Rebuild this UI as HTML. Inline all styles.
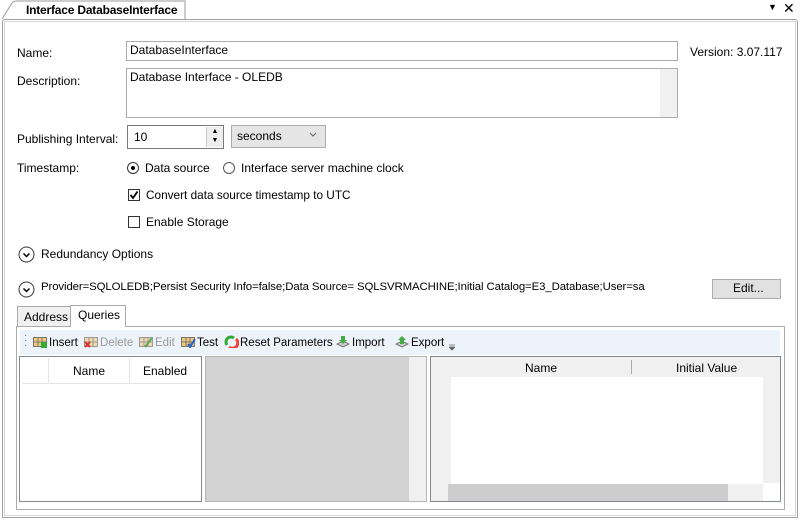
<!DOCTYPE html>
<html><head><style>
body{margin:0;width:800px;height:521px;background:#fff;font-family:"Liberation Sans",sans-serif;font-size:12px;color:#000;position:relative;overflow:hidden}
.a{position:absolute}
.box{position:absolute;border:1px solid #acacac;background:#fff;box-sizing:border-box}
.t{position:absolute;white-space:nowrap}
.cb{position:absolute;width:12px;height:12px;border:1px solid #333;box-sizing:border-box;background:#fff}
.rd{position:absolute;width:12px;height:12px;border:1px solid #333;border-radius:50%;box-sizing:border-box;background:#fff}
.ic{display:inline-block;width:15px;height:13px;vertical-align:-2px;margin-right:1px}
.tb{font-size:11.5px}
</style></head><body>
<div class="a" style="left:0;top:0;width:800px;height:19px;background:#fff"></div>
<svg class="a" style="left:0;top:0" width="190" height="20"><path d="M2 19 L12 3 Q14 1 17 1 L185 1 L185 19" fill="#fff" stroke="#9a9a9a"/></svg>
<div class="t" style="left:26px;top:3px;font-weight:bold;font-size:12px;letter-spacing:-0.2px">Interface DatabaseInterface</div>
<div class="t" style="left:768px;top:2px;font-size:9px">▼</div>
<div class="t" style="left:783px;top:0px;font-size:14px">✕</div>
<div class="a" style="left:2px;top:19px;width:796px;height:499px;border:1px solid #a0a0a0;border-radius:3px 3px 0 0;box-sizing:border-box"></div>
<div class="a" style="left:4px;top:21px;width:792px;height:495px;border:1px solid #d8d8d8;box-sizing:border-box"></div>

<div class="t" style="left:17px;top:46px">Name:</div>
<div class="box" style="left:126px;top:41px;width:552px;height:20px"></div>
<div class="t" style="left:130px;top:43px">DatabaseInterface</div>
<div class="t" style="left:690px;top:45px">Version: 3.07.117</div>

<div class="t" style="left:17px;top:74px">Description:</div>
<div class="box" style="left:126px;top:68px;width:552px;height:50px"></div>
<div class="a" style="left:660px;top:69px;width:17px;height:48px;background:#f0f0f0"></div>
<div class="t" style="left:130px;top:70px">Database Interface - OLEDB</div>

<div class="t" style="left:17px;top:132px">Publishing Interval:</div>
<div class="box" style="left:127px;top:125px;width:97px;height:24px;border-color:#7a7a7a"></div>
<div class="t" style="left:134px;top:130px">10</div>
<div class="a" style="left:206px;top:127px;width:16px;height:20px;background:#eee;border-left:1px solid #ccc;font-size:7px;line-height:9px;text-align:center">▲<br>▼</div>
<div class="box" style="left:231px;top:125px;width:95px;height:23px;background:#e5e5e5"></div>
<div class="t" style="left:237px;top:129px">seconds</div>
<svg class="a" style="left:309px;top:132px" width="8" height="6"><path d="M1 1l3 3 3-3" stroke="#666" fill="none"/></svg>

<div class="t" style="left:17px;top:161px">Timestamp:</div>
<div class="rd" style="left:127px;top:162px"></div><div class="a" style="left:131px;top:166px;width:4px;height:4px;border-radius:50%;background:#000"></div>
<div class="t" style="left:145px;top:161px">Data source</div>
<div class="rd" style="left:223px;top:162px;border-color:#555"></div>
<div class="t" style="left:241px;top:161px">Interface server machine clock</div>

<div class="cb" style="left:128px;top:189px"></div>
<svg class="a" style="left:128px;top:189px" width="12" height="12"><path d="M2.5 6l2.5 3 4.5-6.5" stroke="#000" stroke-width="1.8" fill="none"/></svg>
<div class="t" style="left:146px;top:188px;font-size:11.8px">Convert data source timestamp to UTC</div>
<div class="cb" style="left:128px;top:216px"></div>
<div class="t" style="left:146px;top:215px">Enable Storage</div>

<svg class="a" style="left:18px;top:246px" width="17" height="17"><circle cx="8.5" cy="8.5" r="7.5" stroke="#333" fill="none"/><path d="M5.5 7.5l3 3 3-3" stroke="#000" stroke-width="1.5" fill="none"/></svg>
<div class="t" style="left:41px;top:247px">Redundancy Options</div>
<svg class="a" style="left:18px;top:281px" width="17" height="17"><circle cx="8.5" cy="8.5" r="7.5" stroke="#333" fill="none"/><path d="M5.5 7.5l3 3 3-3" stroke="#000" stroke-width="1.5" fill="none"/></svg>
<div class="t" style="left:41px;top:281px;font-size:11.4px;letter-spacing:-0.1px">Provider=SQLOLEDB;Persist Security Info=false;Data Source= SQLSVRMACHINE;Initial Catalog=E3_Database;User=sa</div>
<div class="box" style="left:712px;top:279px;width:69px;height:20px;background:#e1e1e1;border-color:#adadad"></div>
<div class="t" style="left:733px;top:281px">Edit...</div>

<div class="a" style="left:16px;top:326px;width:769px;height:184px;border:1px solid #acacac;box-sizing:border-box"></div>
<div class="a" style="left:17px;top:306px;width:54px;height:21px;border:1px solid #acacac;background:#f0f0f0;box-sizing:border-box"></div>
<div class="t" style="left:24px;top:310px">Address</div>
<div class="a" style="left:70px;top:305px;width:56px;height:22px;border:1px solid #acacac;border-bottom:none;background:#fff;box-sizing:border-box"></div>
<div class="t" style="left:78px;top:308px">Queries</div>

<div class="a" style="left:20px;top:330px;width:760px;height:25px;background:#edf3fb"></div>
<div class="t" style="left:24px;top:333px;font-size:10px;color:#666;line-height:5px">·<br>·<br>·</div>
<div class="t tb" style="left:33px;top:335px"><svg class="ic"><rect x="0.5" y="2.5" width="13" height="9" fill="#f4c878" stroke="#777"/><path d="M5 3v8M9 3v8M1 7h12" stroke="#777"/><rect x="8" y="7" width="6" height="6" fill="#3a3"/></svg>Insert</div>
<div class="t tb" style="left:84px;top:335px;color:#999"><svg class="ic"><rect x="0.5" y="2.5" width="13" height="9" fill="#f4d8a8" stroke="#999"/><path d="M5 3v8M9 3v8M1 7h12" stroke="#999"/><path d="M1 7l5 5M6 7l-5 5" stroke="#d33" stroke-width="2"/></svg>Delete</div>
<div class="t tb" style="left:139px;top:335px;color:#999"><svg class="ic"><rect x="0.5" y="2.5" width="13" height="9" fill="#f4d8a8" stroke="#999"/><path d="M5 3v8M9 3v8M1 7h12" stroke="#999"/><path d="M6 12l7-9" stroke="#5a5" stroke-width="2"/></svg>Edit</div>
<div class="t tb" style="left:181px;top:335px"><svg class="ic"><rect x="0.5" y="2.5" width="13" height="9" fill="#f4c878" stroke="#777"/><path d="M5 3v8M9 3v8M1 7h12" stroke="#777"/><path d="M7 9l2 3 5-8" stroke="#26c" stroke-width="2" fill="none"/></svg>Test</div>
<div class="t tb" style="left:224px;top:335px"><svg class="ic"><path d="M3 10A5 5 0 0 1 10 3" stroke="#3a3" stroke-width="3" fill="none"/><path d="M12 4A5 5 0 0 1 5 12" stroke="#e43" stroke-width="3" fill="none"/></svg>Reset Parameters</div>
<div class="t tb" style="left:336px;top:335px"><svg class="ic"><path d="M1 9l6 3 6-3-6-3z" fill="#ccc" stroke="#777"/><path d="M5 1h4v4h2l-4 4-4-4h2z" fill="#4a4"/></svg>Import</div>
<div class="t tb" style="left:395px;top:335px"><svg class="ic"><path d="M1 9l6 3 6-3-6-3z" fill="#ccc" stroke="#777"/><path d="M5 9h4V5h2L7 1 3 5h2z" fill="#4a4"/></svg>Export</div>
<svg class="a" style="left:449px;top:344px" width="6" height="7"><path d="M0 1h6M0 3l3 3 3-3z" stroke="#666" fill="#666" stroke-width="0.8"/></svg>

<div class="a" style="left:19px;top:356px;width:183px;height:146px;border:1px solid #828790;box-sizing:border-box;background:#fff"></div>
<div class="a" style="left:22px;top:358px;width:178px;height:25px;background:#fff;border-bottom:1px solid #e5e5e5"></div>
<div class="a" style="left:48px;top:358px;width:1px;height:25px;background:#e5e5e5"></div>
<div class="a" style="left:129px;top:358px;width:1px;height:25px;background:#e5e5e5"></div>
<div class="t" style="left:73px;top:364px">Name</div>
<div class="t" style="left:143px;top:364px">Enabled</div>

<div class="a" style="left:205px;top:356px;width:222px;height:146px;background:#d3d3d3;border:1px solid #b5b5b5;box-sizing:border-box"></div>
<div class="a" style="left:409px;top:357px;width:17px;height:144px;background:#f0f0f0"></div>

<div class="a" style="left:430px;top:356px;width:351px;height:146px;border:1px solid #828790;box-sizing:border-box;background:#fff"></div>
<div class="a" style="left:431px;top:357px;width:20px;height:144px;background:#f0f0f0"></div>
<div class="a" style="left:451px;top:357px;width:312px;height:20px;background:#f0f0f0"></div>
<div class="a" style="left:631px;top:360px;width:1px;height:14px;background:#aaa"></div>
<div class="t" style="left:525px;top:361px">Name</div>
<div class="t" style="left:676px;top:361px">Initial Value</div>
<div class="a" style="left:763px;top:357px;width:17px;height:126px;background:#f0f0f0"></div>
<div class="a" style="left:431px;top:484px;width:332px;height:17px;background:#f0f0f0"></div>
<div class="a" style="left:448px;top:484px;width:280px;height:17px;background:#cdcdcd"></div>
</body></html>
